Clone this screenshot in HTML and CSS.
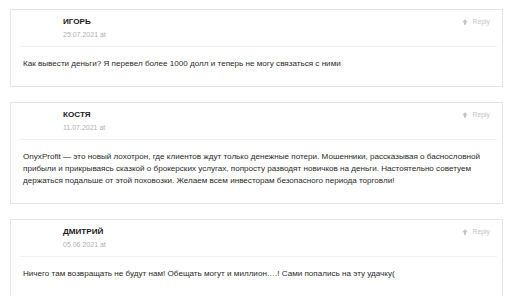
FILE: index.html
```html
<!DOCTYPE html>
<html lang="ru">
<head>
<meta charset="utf-8">
<link rel="stylesheet" href="styles.css">
</head>
<body>
<div class="list">
  <div class="comment">
    <div class="head">
      <div class="avatar"></div>
      <div class="meta">
        <div class="name">ИГОРЬ</div>
        <div class="date">25.07.2021 at</div>
      </div>
      <a class="reply"><svg class="ico" viewBox="0 0 8 8" width="6" height="6"><path d="M4 0.3 L7.7 4.2 H5.4 V7.7 H2.6 V4.2 H0.3 Z" fill="#c4c4c4"/></svg>Reply</a>
    </div>
    <div class="body">Как вывести деньги? Я перевел более 1000 долл и теперь не могу связаться с ними</div>
  </div>
  <div class="comment">
    <div class="head">
      <div class="avatar"></div>
      <div class="meta">
        <div class="name">КОСТЯ</div>
        <div class="date">11.07.2021 at</div>
      </div>
      <a class="reply"><svg class="ico" viewBox="0 0 8 8" width="6" height="6"><path d="M4 0.3 L7.7 4.2 H5.4 V7.7 H2.6 V4.2 H0.3 Z" fill="#c4c4c4"/></svg>Reply</a>
    </div>
    <div class="body">OnyxProfit — это новый лохотрон, где клиентов ждут только денежные потери. Мошенники, рассказывая о баснословной прибыли и прикрываясь сказкой о брокерских услугах, попросту разводят новичков на деньги. Настоятельно советуем держаться подальше от этой поховозки. Желаем всем инвесторам безопасного периода торговли!</div>
  </div>
  <div class="comment">
    <div class="head">
      <div class="avatar"></div>
      <div class="meta">
        <div class="name">ДМИТРИЙ</div>
        <div class="date">05.06.2021 at</div>
      </div>
      <a class="reply"><svg class="ico" viewBox="0 0 8 8" width="6" height="6"><path d="M4 0.3 L7.7 4.2 H5.4 V7.7 H2.6 V4.2 H0.3 Z" fill="#c4c4c4"/></svg>Reply</a>
    </div>
    <div class="body">Ничего там возвращать не будут нам! Обещать могут и миллион….! Сами попались на эту удачку(</div>
  </div>
</div>
</body>
</html>
```

FILE: styles.css
```css
html, body {
  margin: 0;
  padding: 0;
  background: #ffffff;
}
body {
  font-family: "Liberation Sans", Arial, sans-serif;
  color: #222222;
}
.list {
  padding: 9px 9px 0 10px;
  display: flex;
  flex-direction: column;
  gap: 15px;
}
.comment {
  border: 1px solid #e4e4e4;
  padding-bottom: 16px;
}
.head {
  display: flex;
  align-items: flex-start;
  padding: 6px 7px 6px 11px;
  margin: 0 5px 0 9px;
  border-bottom: 1px solid #f1f1f1;
}
.avatar {
  width: 32px;
  height: 22px;
  flex: none;
}
.meta {
  flex: 1;
  display: flex;
  flex-direction: column;
}
.name {
  font-size: 8.1px;
  font-weight: bold;
  line-height: 12px;
  color: #1a1a1a;
}
.date {
  font-size: 7px;
  line-height: 11px;
  margin-top: 1px;
  color: #b0b0b0;
}
.reply {
  display: flex;
  align-items: center;
  gap: 5px;
  font-size: 6.8px;
  line-height: 12px;
  color: #c4c4c4;
}
.ico {
  display: block;
}
.body {
  padding: 11px 12px 0 12px;
  font-size: 8.1px;
  line-height: 12px;
  color: #2a2a2a;
}
```
